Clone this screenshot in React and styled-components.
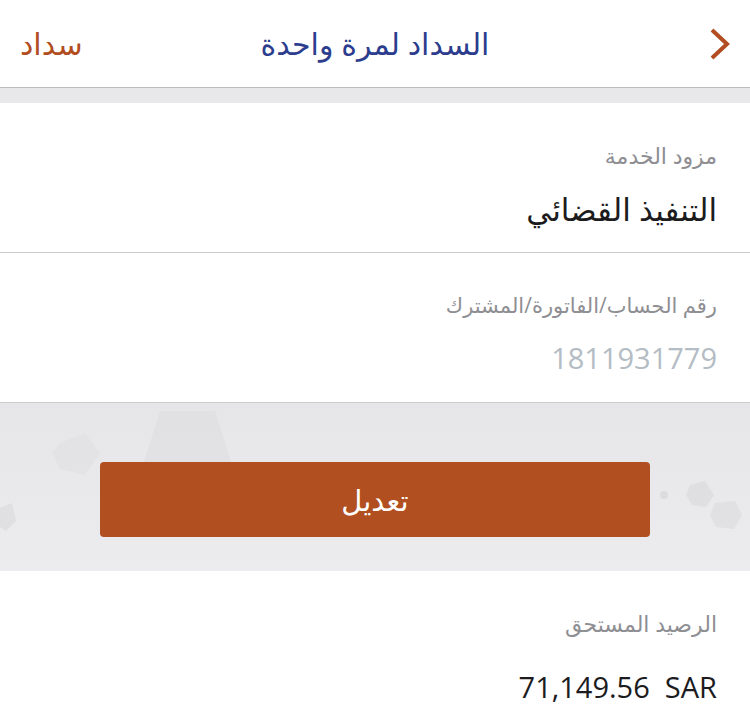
import React from "react";
import styled, { createGlobalStyle } from "styled-components";

const Global = createGlobalStyle`
  html, body {
    margin: 0;
    padding: 0;
    background: #ffffff;
  }
  body {
    font-family: "Open Sans", "DejaVu Sans", sans-serif;
  }
`;

const Page = styled.div`
  width: 750px;
  direction: rtl;
  background: #ffffff;
`;

const Header = styled.header`
  height: 87px;
  display: flex;
  align-items: center;
  justify-content: space-between;
  padding: 0 18px 0 20px;
  border-bottom: 1px solid #bdbdbd;
  position: relative;
  background: #fff;
`;

const Title = styled.h1`
  position: absolute;
  left: 0;
  right: 0;
  top: 0;
  bottom: 0;
  margin: 0;
  display: flex;
  align-items: center;
  justify-content: center;
  font-weight: 400;
  font-size: 30px;
  color: #2c3d8e;
  pointer-events: none;
`;

const BackButton = styled.button`
  border: 0;
  background: none;
  padding: 0;
  display: flex;
  align-items: center;
  z-index: 1;
`;

const HeaderLink = styled.span`
  font-size: 30px;
  color: #b14d20;
  z-index: 1;
`;

const Strip = styled.div`
  height: 15px;
  background: #e8e8ea;
`;

const Field = styled.div`
  height: 149px;
  padding: 0 33px;
  display: flex;
  flex-direction: column;
  border-bottom: 1px solid #cccccc;
`;

const Label = styled.div`
  margin-top: ${(p) => p.$top || 38}px;
  font-size: ${(p) => p.$size || 22}px;
  line-height: 28px;
  color: #8e8e93;
`;

const Value = styled.div`
  margin-top: ${(p) => p.$gap || 21}px;
  font-size: ${(p) => p.$size || 31}px;
  line-height: 38px;
  color: ${(p) => (p.$muted ? "#b4bcc4" : "#1c1c1e")};
`;

const ActionArea = styled.div`
  height: 168px;
  position: relative;
  background: linear-gradient(180deg, #e6e6e8 0%, #ececee 100%);
  display: flex;
  align-items: center;
  justify-content: center;
  overflow: hidden;
`;

const Pattern = styled.svg`
  position: absolute;
  inset: 0;
  width: 100%;
  height: 100%;
`;

const EditButton = styled.button`
  position: relative;
  width: 550px;
  height: 75px;
  margin-top: 24px;
  border: 0;
  border-radius: 4px;
  background: #b24f20;
  color: #ffffff;
  font-family: "Open Sans", "DejaVu Sans", sans-serif;
  font-size: 29px;
`;

const Balance = styled.div`
  padding: 0 33px;
  display: flex;
  flex-direction: column;
  height: 144px;
`;

const Amount = styled.div`
  margin-top: 31px;
  font-size: 29px;
  line-height: 38px;
  color: #1c1c1e;
  direction: ltr;
  text-align: right;
  white-space: pre;
`;

export default function App() {
  return (
    <Page>
      <Global />
      <Header>
        <BackButton aria-label="back">
          <svg width="24" height="34" viewBox="0 0 24 34">
            <polyline
              points="4,3 19,17 4,31"
              fill="none"
              stroke="#b14d20"
              strokeWidth="4"
              strokeLinecap="butt"
            />
          </svg>
        </BackButton>
        <Title>السداد لمرة واحدة</Title>
        <HeaderLink>سداد</HeaderLink>
      </Header>
      <Strip />
      <Field>
        <Label $size={22}>مزود الخدمة</Label>
        <Value $size={31}>التنفيذ القضائي</Value>
      </Field>
      <Field>
        <Label $size={21}>رقم الحساب/الفاتورة/المشترك</Label>
        <Value $size={29} $gap={20} $muted>1811931779</Value>
      </Field>
      <ActionArea>
        <Pattern viewBox="0 0 750 168" preserveAspectRatio="none">
          <polygon points="160,8 215,8 250,120 125,120" fill="#dcdce0" opacity="0.55" />
          <polygon points="60,40 85,30 100,50 85,72 60,66 52,50" fill="#dedee2" opacity="0.45" />
          <polygon points="0,105 12,100 16,118 6,128 0,124" fill="#d8d8dc" opacity="0.6" />
          <polygon points="690,82 705,78 714,92 706,104 692,102 686,92" fill="#d8d8dc" opacity="0.6" />
          <polygon points="715,100 735,98 742,112 734,126 716,124 710,112" fill="#dadade" opacity="0.6" />
          <circle cx="664" cy="92" r="4" fill="#d6d6da" opacity="0.7" />
        </Pattern>
        <EditButton>تعديل</EditButton>
      </ActionArea>
      <Balance>
        <Label $size={22}>الرصيد المستحق</Label>
        <Amount>{"71,149.56  SAR"}</Amount>
      </Balance>
    </Page>
  );
}
